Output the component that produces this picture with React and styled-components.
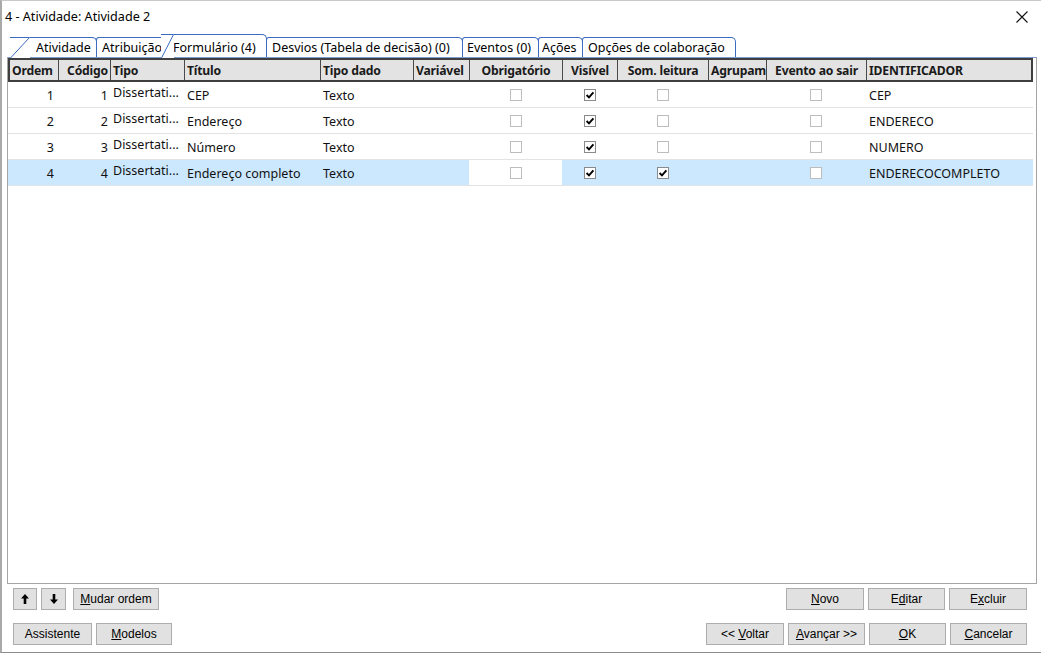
import React from "react";
import styled, { createGlobalStyle } from "styled-components";

const GlobalStyle = createGlobalStyle`
  html, body { margin: 0; padding: 0; background: #ffffff; }
  body { font-family: "Noto Sans", "Open Sans", sans-serif; }
  * { box-sizing: border-box; }
`;

const UI_FONT = `"Noto Sans", "Open Sans", sans-serif`;
const BTN_FONT = `"Liberation Sans", Arial, sans-serif`;

const Window = styled.div`
  width: 1041px;
  height: 653px;
  border-left: 2px solid #a9a9a9;
  border-bottom: 1px solid #8c8c8c;
  border-top: 1px solid #c8c8c8;
  background: #fff;
  display: flex;
  flex-direction: column;
  overflow: hidden;
`;

const TitleBar = styled.div`
  height: 33px;
  display: flex;
  align-items: center;
  justify-content: space-between;
  padding: 0 12px 2px 3px;
  font-family: ${UI_FONT};
  font-size: 12.6px;
  color: #000;
`;

const CloseBtn = styled.div`
  width: 14px;
  height: 14px;
  display: flex;
  align-items: center;
  justify-content: center;
`;

const TabStrip = styled.div`
  height: 23px;
  display: flex;
  align-items: flex-end;
  padding-left: 8px;
`;

const Tab = styled.div`
  position: relative;
  flex: none;
  width: ${(p) => p.$w}px;
  height: ${(p) => (p.$active ? 23 : 20)}px;
  margin-left: ${(p) => p.$ml || 0}px;
  padding-left: ${(p) => p.$pl || 5}px;
  padding-top: ${(p) => (p.$active ? 3 : 0)}px;
  z-index: ${(p) => (p.$active ? 2 : 1)};
  background: #fff;
  border-top: 1px solid #3b6cc2;
  border-right: 1px solid #3b6cc2;
  border-left: ${(p) => (p.$slant ? "none" : "1px solid #3b6cc2")};
  border-radius: ${(p) => (p.$slant ? "0 5px 0 0" : "3px 5px 0 0")};
  display: flex;
  align-items: center;
  font-family: ${UI_FONT};
  font-size: 12.5px;
  color: #000;
  white-space: nowrap;
  overflow: visible;
`;

const TabClip = styled.span`
  overflow: hidden;
  display: block;
  line-height: 19px;
`;

const SlantEdge = styled.svg`
  position: absolute;
  left: 0;
  top: -1px;
`;

const Panel = styled.div`
  flex: 1;
  margin: 0 4px 0 5px;
  border: 1px solid #a5a5a5;
  border-top: 1px solid #7c9cd0;
  display: flex;
  flex-direction: column;
  background: #fff;
  min-height: 0;
`;

const HeaderRow = styled.div`
  display: grid;
  grid-template-columns: 48px 52px 74px 136px 93px 56px 93px 55px 91px 58px 100px 165px;
  width: 1025px;
  height: 24px;
  border: 2px solid #3f3f3f;
  background: #e3e3e3;
`;

const HeaderCell = styled.div`
  border-left: ${(p) => (p.$first ? "none" : "1px solid #4a4a4a")};
  font-family: ${UI_FONT};
  font-weight: 700;
  font-size: 12.2px;
  color: #1a1a1a;
  display: flex;
  align-items: center;
  justify-content: ${(p) =>
    p.$align === "right" ? "flex-end" : p.$align === "center" ? "center" : "flex-start"};
  padding: 0 2px 0 2px;
  white-space: nowrap;
  overflow: hidden;
  letter-spacing: -0.2px;
`;

const Row = styled.div`
  display: grid;
  grid-template-columns: 50px 52px 74px 136px 93px 56px 93px 55px 91px 58px 100px 167px;
  width: 1025px;
  height: 26px;
  border-bottom: 1px solid #e3e3e3;
  background: ${(p) => (p.$selected ? "#cce8ff" : "#fff")};
`;

const Cell = styled.div`
  display: flex;
  align-items: ${(p) => (p.$top ? "flex-start" : "center")};
  padding-top: ${(p) => (p.$top ? 2 : 1)}px;
  justify-content: ${(p) =>
    p.$align === "right" ? "flex-end" : p.$align === "center" ? "center" : "flex-start"};
  padding-left: ${(p) => (p.$align === "left" ? 3 : 0)}px;
  padding-right: ${(p) => (p.$align === "right" ? 2 : 0)}px;
  font-family: ${UI_FONT};
  font-size: 12.5px;
  color: #111;
  white-space: nowrap;
  overflow: hidden;
  background: ${(p) => (p.$white ? "#fff" : "transparent")};
`;

const Box = styled.div`
  width: 12px;
  height: 12px;
  border: 1px solid ${(p) => (p.$checked ? "#8a8a8a" : "#bdbdbd")};
  background: #fff;
  display: flex;
  align-items: center;
  justify-content: center;
`;

const Footer = styled.div`
  display: flex;
  flex-direction: column;
  padding: 4px 14px 7px 11px;
  gap: 13px;
`;

const ButtonRow = styled.div`
  display: flex;
  align-items: center;
  justify-content: space-between;
`;

const Group = styled.div`
  display: flex;
  gap: ${(p) => p.$gap || 4}px;
`;

const Button = styled.button`
  width: ${(p) => p.$w}px;
  height: 22px;
  margin-left: ${(p) => p.$ml || 0}px;
  background: #e1e1e1;
  border: 1px solid #adadad;
  border-radius: 0;
  padding: 0;
  font-family: ${BTN_FONT};
  font-size: 12px;
  color: #000;
  display: flex;
  align-items: center;
  justify-content: center;
  u { text-decoration: underline; text-underline-offset: 1px; }
`;

const Check = ({ checked }) => (
  <Box $checked={checked}>
    {checked && (
      <svg width="10" height="10" viewBox="0 0 10 10">
        <path d="M1.6 5 L4 7.4 L8.4 2.4" fill="none" stroke="#000" strokeWidth="1.9" />
      </svg>
    )}
  </Box>
);

const Arrow = ({ down }) => (
  <svg width="8" height="10" viewBox="0 0 8 10" style={{ transform: down ? "rotate(180deg)" : "none" }}>
    <path d="M4 0 L8 4.5 L5.3 4.5 L5.3 10 L2.7 10 L2.7 4.5 L0 4.5 Z" fill="#000" />
  </svg>
);

const columns = [
  { label: "Ordem", h: "left" },
  { label: "Código", h: "right" },
  { label: "Tipo", h: "left" },
  { label: "Título", h: "left" },
  { label: "Tipo dado", h: "left" },
  { label: "Variável", h: "left" },
  { label: "Obrigatório", h: "center" },
  { label: "Visível", h: "center" },
  { label: "Som. leitura", h: "center" },
  { label: "Agrupamento", h: "left" },
  { label: "Evento ao sair", h: "center" },
  { label: "IDENTIFICADOR", h: "left" },
];

const rows = [
  { n: 1, titulo: "CEP", id: "CEP", som: false },
  { n: 2, titulo: "Endereço", id: "ENDERECO", som: false },
  { n: 3, titulo: "Número", id: "NUMERO", som: false },
  { n: 4, titulo: "Endereço completo", id: "ENDERECOCOMPLETO", som: true, selected: true },
];

const tabs = [
  { label: "Atividade", w: 87, pl: 26, slant: 19 },
  { label: "Atribuição", w: 72, pl: 5, ml: -1, clip: 62 },
  { label: "Formulário (4)", w: 106, pl: 12, ml: -7, slant: 12, active: true },
  { label: "Desvios (Tabela de decisão) (0)", w: 197, pl: 5, ml: -1 },
  { label: "Eventos (0)", w: 77, pl: 4, ml: -1 },
  { label: "Ações", w: 45, pl: 3, ml: -1 },
  { label: "Opções de colaboração", w: 154, pl: 5, ml: -1 },
];

export default function App() {
  return (
    <>
      <GlobalStyle />
      <Window>
        <TitleBar>
          <span>4 - Atividade: Atividade 2</span>
          <CloseBtn>
            <svg width="12" height="12" viewBox="0 0 12 12">
              <path d="M0.5 0.5 L11.5 11.5 M11.5 0.5 L0.5 11.5" stroke="#111" strokeWidth="1.1" />
            </svg>
          </CloseBtn>
        </TitleBar>
        <TabStrip>
          {tabs.map((t) => (
            <Tab key={t.label} $w={t.w} $pl={t.pl} $ml={t.ml} $slant={t.slant} $active={t.active}>
              {t.slant && (
                <SlantEdge width={t.slant + 1} height={t.active ? 24 : 21}>
                  <polygon
                    points={`0,${t.active ? 24 : 21} ${t.slant + 1},0 ${t.slant + 1},${t.active ? 24 : 21}`}
                    fill="#fff"
                  />
                  <line
                    x1="0.5"
                    y1={t.active ? 24 : 21}
                    x2={t.slant + 0.5}
                    y2="0.5"
                    stroke="#3b6cc2"
                    strokeWidth="1"
                  />
                </SlantEdge>
              )}
              <TabClip style={t.clip ? { width: t.clip } : undefined}>{t.label}</TabClip>
            </Tab>
          ))}
        </TabStrip>
        <Panel>
          <HeaderRow>
            {columns.map((c, i) => (
              <HeaderCell key={c.label} $first={i === 0} $align={c.h}>
                {c.label}
              </HeaderCell>
            ))}
          </HeaderRow>
          {rows.map((r) => (
            <Row key={r.n} $selected={r.selected}>
              <Cell $align="right" style={{ paddingRight: 4 }}>{r.n}</Cell>
              <Cell $align="right">{r.n}</Cell>
              <Cell $align="left" $top>Dissertati...</Cell>
              <Cell $align="left">{r.titulo}</Cell>
              <Cell $align="left">Texto</Cell>
              <Cell $align="left" />
              <Cell $align="center" $white={r.selected}>
                <Check checked={false} />
              </Cell>
              <Cell $align="center">
                <Check checked />
              </Cell>
              <Cell $align="center">
                <Check checked={r.som} />
              </Cell>
              <Cell $align="left" />
              <Cell $align="center">
                <Check checked={false} />
              </Cell>
              <Cell $align="left">{r.id}</Cell>
            </Row>
          ))}
        </Panel>
        <Footer>
          <ButtonRow>
            <Group $gap={4}>
              <Button $w={24}>
                <Arrow />
              </Button>
              <Button $w={25}>
                <Arrow down />
              </Button>
              <Button $w={86} $ml={3}>
                <span>
                  <u>M</u>udar ordem
                </span>
              </Button>
            </Group>
            <Group $gap={4}>
              <Button $w={78}>
                <span>
                  <u>N</u>ovo
                </span>
              </Button>
              <Button $w={77}>
                <span>
                  E<u>d</u>itar
                </span>
              </Button>
              <Button $w={78}>
                <span>
                  E<u>x</u>cluir
                </span>
              </Button>
            </Group>
          </ButtonRow>
          <ButtonRow>
            <Group $gap={4}>
              <Button $w={79}>Assistente</Button>
              <Button $w={76}>
                <span>
                  <u>M</u>odelos
                </span>
              </Button>
            </Group>
            <Group $gap={4}>
              <Button $w={78}>
                <span>
                  &lt;&lt; <u>V</u>oltar
                </span>
              </Button>
              <Button $w={77}>
                <span>
                  <u>A</u>vançar &gt;&gt;
                </span>
              </Button>
              <Button $w={77}>
                <span>
                  <u>O</u>K
                </span>
              </Button>
              <Button $w={77}>
                <span>
                  <u>C</u>ancelar
                </span>
              </Button>
            </Group>
          </ButtonRow>
        </Footer>
      </Window>
    </>
  );
}
